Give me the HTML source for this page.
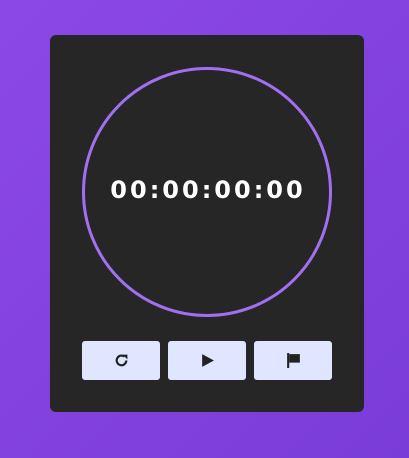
<!DOCTYPE html>
<html><head><style>
html,body{margin:0;width:409px;height:458px;overflow:hidden}
body{background:linear-gradient(135deg,#8c48e6,#7a3cd8);font-family:"Liberation Sans",sans-serif;position:relative}
.card{position:absolute;left:50px;top:35px;width:314px;height:377px;background:#262626;border-radius:6px}
.circ{position:absolute;left:82px;top:67px;width:244px;height:244px;border:3px solid #a070f0;border-radius:50%}
.t{position:absolute;left:0;width:409px;top:176px;text-align:center;color:#fff;font-family:"DejaVu Sans",sans-serif;font-weight:bold;font-size:24px;letter-spacing:3px;padding-left:7px;box-sizing:border-box}
.b{position:absolute;top:341px;width:78px;height:39px;background:#e0e6ff;border-radius:3px;display:flex;align-items:center;justify-content:center}
</style></head><body>
<div class="card"></div>
<div class="circ"></div>
<div class="t">00:00:00:00</div>
<div class="b" style="left:82px"><svg width="15" height="15" viewBox="0 0 14 14"><path d="M11.5 7A4.5 4.5 0 1 1 9.8 3.4" fill="none" stroke="#222" stroke-width="2"/><path d="M8 1.5h4.5v4.5z" fill="#222"/></svg></div>
<div class="b" style="left:168px"><svg width="15" height="15" viewBox="0 0 14 14"><path d="M2 1l11 6-11 6z" fill="#222"/></svg></div>
<div class="b" style="left:254px"><svg width="15" height="17" viewBox="0 0 14 16"><rect x="1" y="1" width="2" height="14" fill="#222"/><path d="M3 2h10v8H3z" fill="#222"/></svg></div>
</body></html>
